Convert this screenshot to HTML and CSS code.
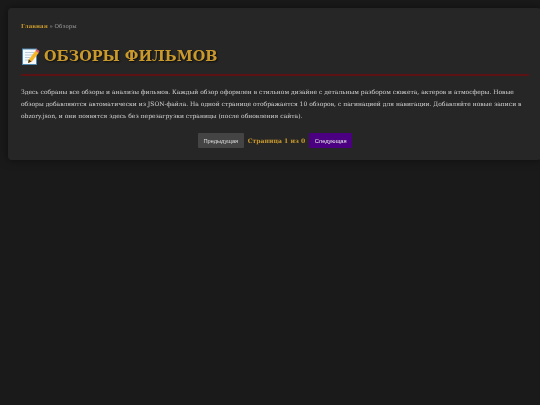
FILE: index.html
```html
<!DOCTYPE html>
<html lang="ru">
<head>
<meta charset="utf-8">
<title>Обзоры фильмов</title>
<link rel="stylesheet" href="styles.css">
</head>
<body>
<main class="card">
  <nav class="crumbs"><a class="crumb-link">Главная</a> » Обзоры</nav>
  <h1 class="title">
    <svg class="memo" viewBox="0 0 18 17" aria-hidden="true">
      <rect x="0.500" y="1" width="14" height="15.500" fill="#f4f8fb" stroke="#4f86ad" stroke-width="1"/>
      <path d="M3 4.500h9M3 7h8M3 9.500h5M3 12h4" stroke="#a9bccb" stroke-width="0.800"/>
      <path d="M6 15l0.800-3.500 7-9 3 2.300-7 9z" fill="#f4b428"/>
      <path d="M6 15l0.800-3.500 2.700 2z" fill="#4a3a20"/>
      <path d="M13.500 2.800l1.200-1.800 2.800 2-1 2z" fill="#dd5f6b"/>
    </svg>
    <span>ОБЗОРЫ ФИЛЬМОВ</span>
  </h1>
  <p class="intro">Здесь собраны все обзоры и анализы фильмов. Каждый обзор оформлен в стильном дизайне с детальным разбором сюжета, актеров и атмосферы. Новые обзоры добавляются автоматически из JSON-файла. На одной странице отображается 10 обзоров, с пагинацией для навигации. Добавляйте новые записи в obzory.json, и они появятся здесь без перезагрузки страницы (после обновления сайта).</p>
  <div class="pager">
    <button class="btn btn-prev">Предыдущая</button>
    <span class="page-info">Страница 1 из 0</span>
    <button class="btn btn-next">Следующая</button>
  </div>
</main>
</body>
</html>
```

FILE: styles.css
```css
html, body {
  margin: 0;
  height: 100%;
  overflow: hidden;
}
body {
  background: #1a1a1a;
  padding: 8px 0 0 8px;
  box-sizing: border-box;
  font-family: "DejaVu Serif", "Liberation Serif", serif;
  color: #cfcfcf;
}
.card {
  width: 533px;
  height: 152px;
  box-sizing: border-box;
  background: #262626;
  border-radius: 4px;
  padding: 14px 12px 0 13px;
  box-shadow: 0 0 10px rgba(0, 0, 0, 0.5);
  filter: blur(0.3px);
}
.crumbs {
  font-size: 5.500px;
  line-height: 8px;
  color: #999;
}
.crumb-link {
  color: #c9992c;
  font-weight: bold;
}
.title {
  margin: 17px 0 0;
  display: flex;
  align-items: center;
  gap: 4px;
  font-size: 14.400px;
  line-height: 18px;
  color: #c9992c;
  font-weight: bold;
  text-shadow: 1px 1px 2px rgba(0, 0, 0, 0.7);
  padding-bottom: 9px;
  border-bottom: 2.500px solid #5c1212;
}
.memo {
  width: 18px;
  height: 17px;
  flex: none;
  margin-left: 1px;
}
.intro {
  margin: 10px 0 0;
  font-size: 6px;
  line-height: 12px;
  color: #d2d2d2;
}
.pager {
  margin-top: 11px;
  display: flex;
  justify-content: center;
  align-items: center;
  gap: 4px;
}
.btn {
  border: 0;
  border-radius: 1px;
  height: 15px;
  padding: 0 5.500px;
  font-family: "Liberation Sans", sans-serif;
  font-size: 5.700px;
  color: #ddd;
}
.btn-prev { background: #444; }
.btn-next { background: #4b0082; color: #e8e8e8; }
.page-info {
  font-size: 6.100px;
  font-weight: bold;
  color: #c9992c;
}
```
